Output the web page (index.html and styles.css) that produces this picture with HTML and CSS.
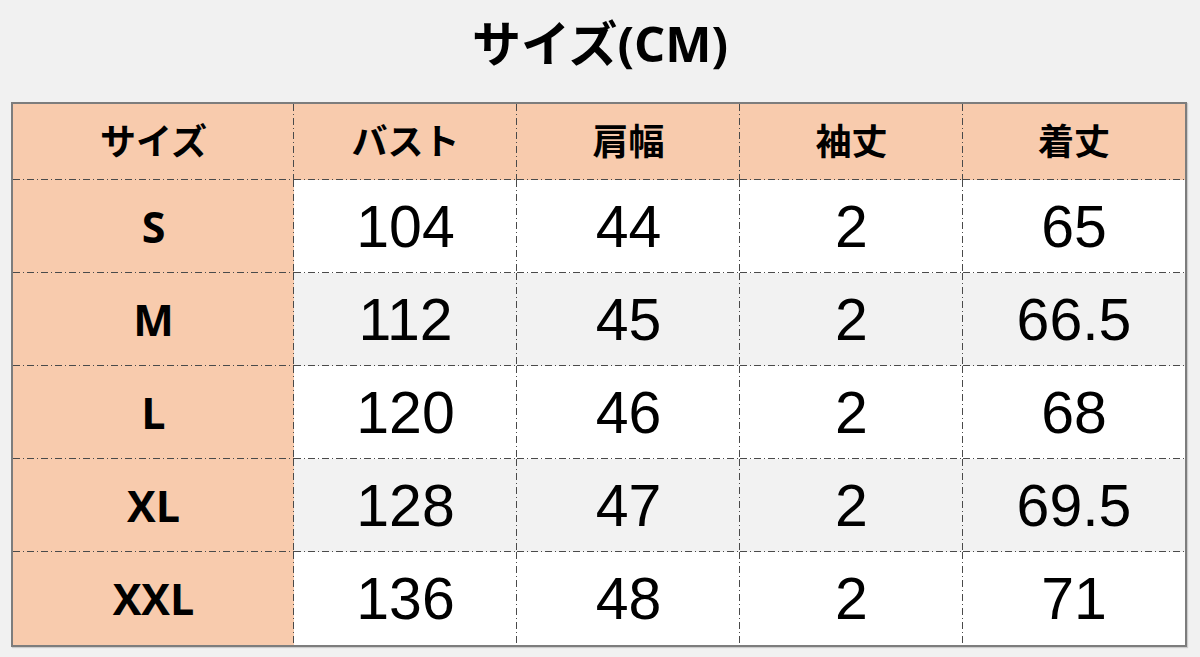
FILE: index.html
```html
<!DOCTYPE html>
<html lang="ja">
<head>
<meta charset="utf-8">
<link rel="stylesheet" href="styles.css">
</head>
<body>
<div class="page">
  <h1 class="title">サイズ(CM)</h1>
  <table class="size-table">
    <colgroup>
      <col class="c-first"><col class="c-n"><col class="c-n"><col class="c-n"><col class="c-last">
    </colgroup>
    <thead>
      <tr class="head">
        <th>サイズ</th><th>バスト</th><th>肩幅</th><th>袖丈</th><th>着丈</th>
      </tr>
    </thead>
    <tbody>
      <tr class="odd"><th>S</th><td>104</td><td>44</td><td>2</td><td>65</td></tr>
      <tr class="even"><th>M</th><td>112</td><td>45</td><td>2</td><td>66.5</td></tr>
      <tr class="odd"><th>L</th><td>120</td><td>46</td><td>2</td><td>68</td></tr>
      <tr class="even"><th>XL</th><td>128</td><td>47</td><td>2</td><td>69.5</td></tr>
      <tr class="odd last"><th>XXL</th><td>136</td><td>48</td><td>2</td><td>71</td></tr>
    </tbody>
  </table>
</div>
</body>
</html>
```
FILE: styles.css
```css
html, body {
  margin: 0;
  padding: 0;
  background: #f1f1f1;
}
.page {
  width: 1200px;
  height: 657px;
  padding: 0 0 0 11px;
  box-sizing: border-box;
}
.title {
  margin: 0;
  height: 102px;
  line-height: 86px;
  text-align: center;
  font-family: "Open Sans", "Noto Sans CJK JP", sans-serif;
  font-weight: 700;
  font-size: 49px;
  color: #000;
  width: 1178px;
}
.size-table {
  border-collapse: separate;
  border-spacing: 0;
  border: 2px solid #7d7d7d;
  width: 1176px;
  table-layout: fixed;
  box-shadow: 1px 1px 1px rgba(0,0,0,0.15);
}
.c-first { width: 281px; }
.c-n { width: 223px; }
.c-last { width: 222px; }
.size-table th,
.size-table td {
  padding: 0;
  text-align: center;
  vertical-align: middle;
  --dash: #4a4a4a;
  background-image:
    repeating-linear-gradient(to right, var(--dash) 0 7px, transparent 7px 10px, var(--dash) 10px 11px, transparent 11px 14px),
    repeating-linear-gradient(to bottom, var(--dash) 0 7px, transparent 7px 10px, var(--dash) 10px 11px, transparent 11px 14px);
  background-size: 100% 1px, 1px 100%;
  background-position: left bottom, right top;
  background-repeat: no-repeat, no-repeat;
}
.size-table tr > :last-child {
  background-image:
    repeating-linear-gradient(to right, var(--dash) 0 7px, transparent 7px 10px, var(--dash) 10px 11px, transparent 11px 14px);
  background-size: 100% 1px;
  background-position: left bottom;
}
.size-table tr.last > * {
  background-image:
    repeating-linear-gradient(to bottom, var(--dash) 0 7px, transparent 7px 10px, var(--dash) 10px 11px, transparent 11px 14px);
  background-size: 1px 100%;
  background-position: right top;
}
.size-table tr.last > :last-child {
  background-image: none;
}
.head > th {
  height: 70px;
  padding-bottom: 6px;
  background-color: #f8cbad;
  font-family: "Noto Sans CJK JP", sans-serif;
  font-weight: 700;
  font-size: 36px;
  color: #000;
}
tbody tr { height: 93px; }
tbody th {
  padding-bottom: 6px;
  background-color: #f8cbad;
  font-family: "Open Sans", "Noto Sans CJK JP", sans-serif;
  font-weight: 700;
  font-size: 43px;
  color: #000;
}
tbody td {
  padding-bottom: 6px;
  font-family: "Liberation Sans", Arial, sans-serif;
  font-weight: 400;
  font-size: 59px;
  color: #000;
}
tr.odd td { background-color: #ffffff; }
tr.even td { background-color: #f2f2f2; }
```
